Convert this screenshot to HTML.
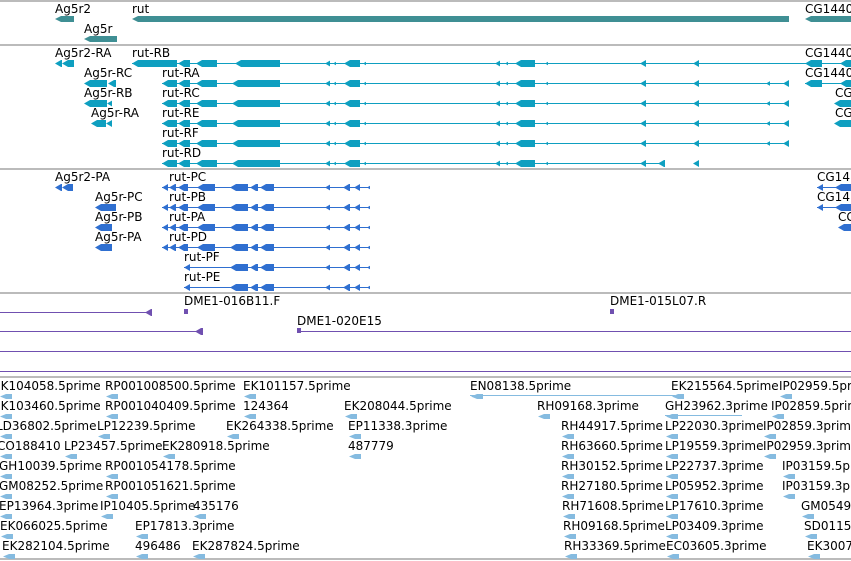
<!DOCTYPE html>
<html><head><meta charset="utf-8"><style>
body{margin:0;width:851px;height:561px;overflow:hidden;background:#fff;position:relative;font-family:"DejaVu Sans","Liberation Sans",sans-serif;font-size:12px;color:#000}
div{position:absolute}
.t{white-space:nowrap;line-height:14px}
.h{height:2px;background:#bbb;left:0;width:851px}
.a{clip-path:polygon(0 50%,6px 0,100% 0,100% 100%,6px 100%)}
</style></head><body>
<div class="h" style="top:0"></div>
<div class="h" style="top:44px"></div>
<div class="h" style="top:168px"></div>
<div class="h" style="top:292px"></div>
<div class="h" style="top:376px"></div>
<div class="h" style="top:558px"></div>
<div id="c"></div>
<script>
var c=document.getElementById('c'),h='';
function T(x,y,s){h+='<div class="t" style="left:'+x+'px;top:'+y+'px">'+s+'</div>';}
function B(x1,x2,y,hh,col,cl){h+='<div'+(cl?' class="a"':'')+' style="left:'+x1+'px;top:'+y+'px;width:'+(x2-x1)+'px;height:'+hh+'px;background:'+col+'"></div>';}
function L(x1,x2,y,col){B(x1,x2,y,1,col);}
var G='#3f8f94';
T(55,2,'Ag5r2');B(55,74,16,6,G,1);
T(132,2,'rut');B(132,789,16,6,G,1);
T(805,2,'CG1440');B(805,851,16,6,G,1);
T(84,22,'Ag5r');B(84,117,36,6,G,1);
var C='#0e9fc0';
function tx(x1,x2,y,ex,col){col=col||C;L(x1,x2,y,col);ex.forEach(function(e){B(e[0],e[1],y-3,7,col,1);});}
var ex1=[[132,177],[178,190],[196,217],[235,280],[325,330],[333,336],[344,360],[363,366],[495,500],[505,508],[515,535],[545,548],[640,646],[693,699]];
T(55,46,'Ag5r2-RA');B(55,62,60,7,C,1);B(62,74,60,7,C,1);
T(132,46,'rut-RB');tx(132,851,63,ex1);
var ex2=[[162,177],[178,190],[196,217],[232,280],[325,330],[333,336],[344,360],[363,366],[495,500],[505,508],[515,535],[545,548],[640,646],[693,699],[766,770],[783,789]];
var ys=[83,103,123,143,163],nm=['rut-RA','rut-RC','rut-RE','rut-RF','rut-RD'];
for(var i=0;i<5;i++){T(162,ys[i]-17,nm[i]);tx(162,i==4?665:789,ys[i],i==4?ex2.slice(0,14).concat([[658,665]]):ex2);}
T(84,66,'Ag5r-RC');B(84,107,80,7,C,1);B(108,116,80,7,C,1);
T(84,86,'Ag5r-RB');B(84,107,100,7,C,1);B(107,112,100,7,C,1);
T(91,106,'Ag5r-RA');B(91,106,120,7,C,1);B(106,112,120,7,C,1);
T(805,46,'CG1440');tx(805,851,63,[[805,822],[840,851]]);
T(805,66,'CG1440');tx(805,851,83,[[805,822],[840,851]]);
T(835,86,'CG');B(834,851,100,7,C,1);T(835,106,'CG');B(834,851,120,7,C,1);
var P='#2f6fd0';
var pe=[[169,176],[178,188],[197,215],[230,248],[250,258],[260,274],[325,330],[343,350],[354,360],[367,370]];
T(55,170,'Ag5r2-PA');B(55,62,184,7,P,1);B(62,73,184,7,P,1);
var py=[187,207,227,247],pn=['rut-PC','rut-PB','rut-PA','rut-PD'];
for(i=0;i<4;i++){T(169,py[i]-17,pn[i]);tx(162,370,py[i],[[162,168]].concat(pe),P);}
T(184,250,'rut-PF');tx(184,370,267,[[184,190]].concat(pe.slice(3)),P);
T(184,270,'rut-PE');tx(184,370,287,[[184,190]].concat(pe.slice(3)),P);
T(95,190,'Ag5r-PC');B(95,116,204,7,P,1);T(95,210,'Ag5r-PB');B(95,112,224,7,P,1);T(95,230,'Ag5r-PA');B(95,112,244,7,P,1);
T(817,170,'CG14');tx(817,851,187,[[817,823],[835,851]],P);T(817,190,'CG14');tx(817,851,207,[[817,823],[835,851]],P);T(838,210,'CG');B(838,851,224,7,P,1);
var V='#7050b0';
L(0,150,312,V);B(145,152,309,7,V,1);T(184,294,'DME1-016B11.F');B(184,188,309,5,V);
T(610,294,'DME1-015L07.R');B(610,614,309,5,V);
L(0,203,331,V);B(195,203,328,7,V,1);T(297,314,'DME1-020E15');L(297,851,331,V);B(297,301,328,5,V);
L(0,851,351,V);L(0,851,371,V);
var E='#85bbe0';
var rows=[
[[-7,'EK104058.5prime'],[105,'RP001008500.5prime'],[243,'EK101157.5prime'],[470,'EN08138.5prime'],[671,'EK215564.5prime'],[779,'IP02959.5prime']],
[[-7,'EK103460.5prime'],[105,'RP001040409.5prime'],[243,'124364'],[344,'EK208044.5prime'],[537,'RH09168.3prime'],[665,'GH23962.3prime'],[771,'IP02859.5prime']],
[[-4,'LD36802.5prime'],[97,'LP12239.5prime'],[226,'EK264338.5prime'],[348,'EP11338.3prime'],[561,'RH44917.5prime'],[665,'LP22030.3prime'],[763,'IP02859.3prime']],
[[-3,'CO188410'],[64,'LP23457.5prime'],[162,'EK280918.5prime'],[348,'487779'],[561,'RH63660.5prime'],[665,'LP19559.3prime'],[763,'IP02959.3prime']],
[[-1,'GH10039.5prime'],[105,'RP001054178.5prime'],[561,'RH30152.5prime'],[665,'LP22737.3prime'],[782,'IP03159.5prime']],
[[-1,'GM08252.5prime'],[105,'RP001051621.5prime'],[561,'RH27180.5prime'],[665,'LP05952.3prime'],[782,'IP03159.3prime']],
[[-1,'EP13964.3prime'],[100,'IP10405.5prime'],[193,'435176'],[562,'RH71608.5prime'],[665,'LP17610.3prime'],[801,'GM05490']],
[[0,'EK066025.5prime'],[135,'EP17813.3prime'],[563,'RH09168.5prime'],[665,'LP03409.3prime'],[804,'SD01150']],
[[2,'EK282104.5prime'],[135,'496486'],[192,'EK287824.5prime'],[564,'RH33369.5prime'],[666,'EC03605.3prime'],[807,'EK30070']]];
rows.forEach(function(r,k){var y=379+k*20;r.forEach(function(e){var x=Math.max(0,e[0]+1);B(x,x+12,y+15,5,E,1);});r.forEach(function(e){T(e[0],y,e[1]);});});
L(470,675,395,E);L(665,742,415,E);
c.innerHTML=h;
</script>
</body></html>
